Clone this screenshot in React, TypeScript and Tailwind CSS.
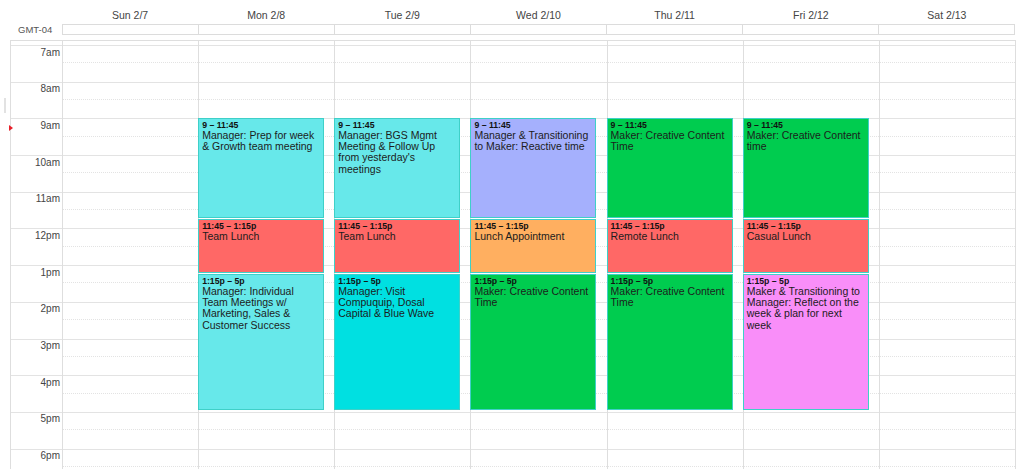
const days = ['Sun 2/7', 'Mon 2/8', 'Tue 2/9', 'Wed 2/10', 'Thu 2/11', 'Fri 2/12', 'Sat 2/13'];
const hours = ['7am', '8am', '9am', '10am', '11am', '12pm', '1pm', '2pm', '3pm', '4pm', '5pm', '6pm'];

type Ev = { time: string; title: string; bg: string; h: string };

const morning = 'h-[100.9px]';
const lunch = 'h-[55.05px]';
const afternoon = 'h-[137.6px]';

const events: Record<number, Ev[]> = {
  1: [
    { time: '9 – 11:45', title: 'Manager: Prep for week & Growth team meeting', bg: 'bg-[#67e8ea]', h: morning },
    { time: '11:45 – 1:15p', title: 'Team Lunch', bg: 'bg-[#ff6866]', h: lunch },
    { time: '1:15p – 5p', title: 'Manager: Individual Team Meetings w/ Marketing, Sales & Customer Success', bg: 'bg-[#67e8ea]', h: afternoon },
  ],
  2: [
    { time: '9 – 11:45', title: "Manager: BGS Mgmt Meeting & Follow Up from yesterday's meetings", bg: 'bg-[#67e8ea]', h: morning },
    { time: '11:45 – 1:15p', title: 'Team Lunch', bg: 'bg-[#ff6866]', h: lunch },
    { time: '1:15p – 5p', title: 'Manager: Visit Compuquip, Dosal Capital & Blue Wave', bg: 'bg-[#00e0e1]', h: afternoon },
  ],
  3: [
    { time: '9 – 11:45', title: 'Manager & Transitioning to Maker: Reactive time', bg: 'bg-[#a5b0fd]', h: morning },
    { time: '11:45 – 1:15p', title: 'Lunch Appointment', bg: 'bg-[#ffaf60]', h: lunch },
    { time: '1:15p – 5p', title: 'Maker: Creative Content Time', bg: 'bg-[#00cc4f]', h: afternoon },
  ],
  4: [
    { time: '9 – 11:45', title: 'Maker: Creative Content Time', bg: 'bg-[#00cc4f]', h: morning },
    { time: '11:45 – 1:15p', title: 'Remote Lunch', bg: 'bg-[#ff6866]', h: lunch },
    { time: '1:15p – 5p', title: 'Maker: Creative Content Time', bg: 'bg-[#00cc4f]', h: afternoon },
  ],
  5: [
    { time: '9 – 11:45', title: 'Maker: Creative Content time', bg: 'bg-[#00cc4f]', h: morning },
    { time: '11:45 – 1:15p', title: 'Casual Lunch', bg: 'bg-[#ff6866]', h: lunch },
    { time: '1:15p – 5p', title: 'Maker & Transitioning to Manager: Reflect on the week & plan for next week', bg: 'bg-[#f98ef9]', h: afternoon },
  ],
};

function HourCells() {
  return (
    <>
      {hours.map((h) => (
        <div key={h} className="h-[36.7px] shrink-0 border-t border-[#e3e3e3]">
          <div className="h-[17.35px] border-b border-dotted border-[#e3e3e3]" />
        </div>
      ))}
    </>
  );
}

function EventBlock({ ev }: { ev: Ev }) {
  return (
    <div className={`${ev.h} shrink-0 pb-[1.7px]`}>
      <div className={`h-full w-[126px] overflow-hidden border border-[#3fd0c8] px-[3px] pt-[2px] ${ev.bg}`}>
        <div className="text-[8.7px] font-bold leading-[8.5px] text-[#111]">{ev.time}</div>
        <div className="text-[10.5px] leading-[11.3px] text-[#1c1c1c]">{ev.title}</div>
      </div>
    </div>
  );
}

export default function App() {
  return (
    <div className="relative h-[469px] w-[1024px] overflow-hidden bg-white font-[Liberation_Sans,Arial,sans-serif]">
      {/* day names */}
      <div className="ml-[62px] flex h-[24px] w-[953px]">
        {days.map((d) => (
          <div key={d} className="flex-1 pt-[9px] text-center text-[10.5px] leading-[12px] text-[#444]">
            {d}
          </div>
        ))}
      </div>

      {/* all-day row */}
      <div className="flex h-[11px]">
        <div className="w-[62px] pl-[18px] pt-[0.5px] text-[9.5px] leading-[10px] text-[#555]">GMT-04</div>
        <div className="flex w-[953px]">
          {days.map((d, i) => (
            <div key={d} className={`h-[11px] flex-1 border-y border-l border-[#dcdcdc] ${i === 6 ? 'border-r' : ''}`} />
          ))}
        </div>
      </div>

      {/* time grid */}
      <div className="ml-[10px] mt-[5px] flex h-[440px] w-[1006px] border-x border-t border-[#dedede]">
        <div className="flex w-[51px] shrink-0 flex-col">
          <div className="h-[4px] shrink-0" />
          {hours.map((h) => (
            <div key={h} className="h-[36.7px] shrink-0 border-t border-[#e3e3e3] pr-[2px] pt-[0.5px] text-right text-[10px] leading-[12px] text-[#444]">
              {h}
            </div>
          ))}
        </div>
        {days.map((d, i) => (
          <div key={d} className="relative flex flex-1 flex-col border-l border-[#dedede]">
            <div className="h-[4px] shrink-0" />
            <HourCells />
            {events[i] && (
              <div className="absolute left-[-1px] right-0 top-[4px] flex flex-col">
                <div className="h-[73.4px] shrink-0" />
                {events[i].map((ev) => (
                  <EventBlock key={ev.time} ev={ev} />
                ))}
              </div>
            )}
          </div>
        ))}
      </div>

      {/* small markers on the left edge */}
      <div className="absolute left-[4px] top-[98px] h-[15px] w-[2px] bg-[#e2e2e2]" />
      <svg className="absolute left-[9px] top-[125px]" width="4" height="6" viewBox="0 0 4 6">
        <path d="M0 0 L4 3 L0 6 Z" fill="#e8202a" />
      </svg>
    </div>
  );
}
